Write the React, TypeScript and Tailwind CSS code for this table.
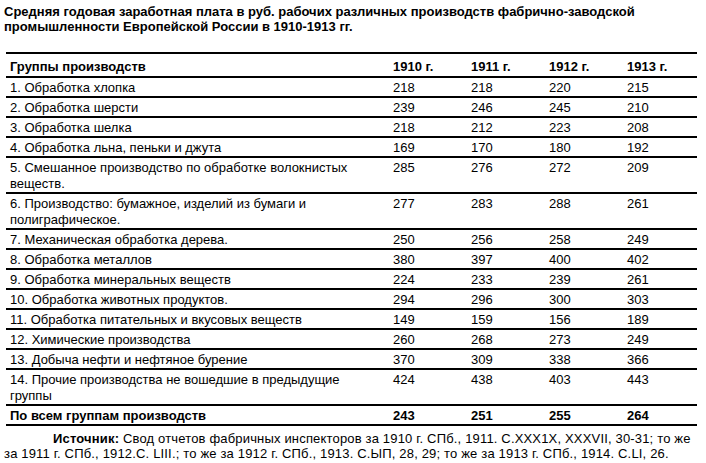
const ROWS: { name: string; v: string[] }[] = [
  { name: '1. Обработка хлопка', v: ['218', '218', '220', '215'] },
  { name: '2. Обработка шерсти', v: ['239', '246', '245', '210'] },
  { name: '3. Обработка шелка', v: ['218', '212', '223', '208'] },
  { name: '4. Обработка льна, пеньки и джута', v: ['169', '170', '180', '192'] },
  { name: '5. Смешанное производство по обработке волокнистых веществ.', v: ['285', '276', '272', '209'] },
  { name: '6. Производство: бумажное, изделий из бумаги и полиграфическое.', v: ['277', '283', '288', '261'] },
  { name: '7. Механическая обработка дерева.', v: ['250', '256', '258', '249'] },
  { name: '8. Обработка металлов', v: ['380', '397', '400', '402'] },
  { name: '9. Обработка минеральных веществ', v: ['224', '233', '239', '261'] },
  { name: '10. Обработка животных продуктов.', v: ['294', '296', '300', '303'] },
  { name: '11. Обработка питательных и вкусовых веществ', v: ['149', '159', '156', '189'] },
  { name: '12. Химические производства', v: ['260', '268', '273', '249'] },
  { name: '13. Добыча нефти и нефтяное бурение', v: ['370', '309', '338', '366'] },
  { name: '14. Прочие производства не вошедшие в предыдущие группы', v: ['424', '438', '403', '443'] },
];

const YEARS = ['1910 г.', '1911 г.', '1912 г.', '1913 г.'];
const TOTAL = ['243', '251', '255', '264'];

export default function App() {
  return (
    <div className="w-[706px] h-[463px] bg-white text-black font-['Liberation_Sans',Arial,sans-serif] text-[13px] leading-[15px] pt-[4px] px-[4px]">
      <h1 className="font-bold text-[13px] leading-[15px] w-[680px]">
        Средняя годовая заработная плата в руб. рабочих различных производств фабрично-заводской промышленности Европейской России в 1910-1913 гг.
      </h1>

      <table className="mt-[18px] ml-[2px] w-[691px] border-collapse table-fixed border-t-2 border-black">
        <colgroup>
          <col className="w-[383px]" />
          <col className="w-[78px]" />
          <col className="w-[78px]" />
          <col className="w-[78px]" />
          <col className="w-[74px]" />
        </colgroup>
        <thead>
          <tr className="border-b-2 border-black font-bold">
            <td className="pl-[4px] pt-[5px] pb-[1px] leading-[16px]">Группы производств</td>
            {YEARS.map((y) => (
              <td key={y} className="pl-[4px] pt-[5px] pb-[1px] leading-[16px]">{y}</td>
            ))}
          </tr>
        </thead>
        <tbody>
          {ROWS.map((r) => (
            <tr key={r.name} className="border-b-2 border-black align-top">
              <td className="pl-[4px] pr-[14px] pt-[2px] pb-0 leading-[16px]">{r.name}</td>
              {r.v.map((n, i) => (
                <td key={i} className="pl-[4px] pt-[2px] pb-0 leading-[16px]">{n}</td>
              ))}
            </tr>
          ))}
          <tr className="border-b-2 border-black font-bold">
            <td className="pl-[4px] pt-[2px] pb-0 leading-[16px]">По всем группам производств</td>
            {TOTAL.map((n, i) => (
              <td key={i} className="pl-[4px] pt-[2px] pb-0 leading-[16px]">{n}</td>
            ))}
          </tr>
        </tbody>
      </table>

      <p className="mt-[5px] w-[697px] indent-[49px] leading-[15px] tracking-[0.17px]">
        <b>Источник:</b> Свод отчетов фабричных инспекторов за 1910 г. СПб., 1911. С.XXX1X, XXXVII, 30-31; то же за 1911 г. СПб., 1912.С. LIII.; то же за 1912 г. СПб., 1913. С.ЫП, 28, 29; то же за 1913 г. СПб., 1914. С.LI, 26.
      </p>
    </div>
  );
}
